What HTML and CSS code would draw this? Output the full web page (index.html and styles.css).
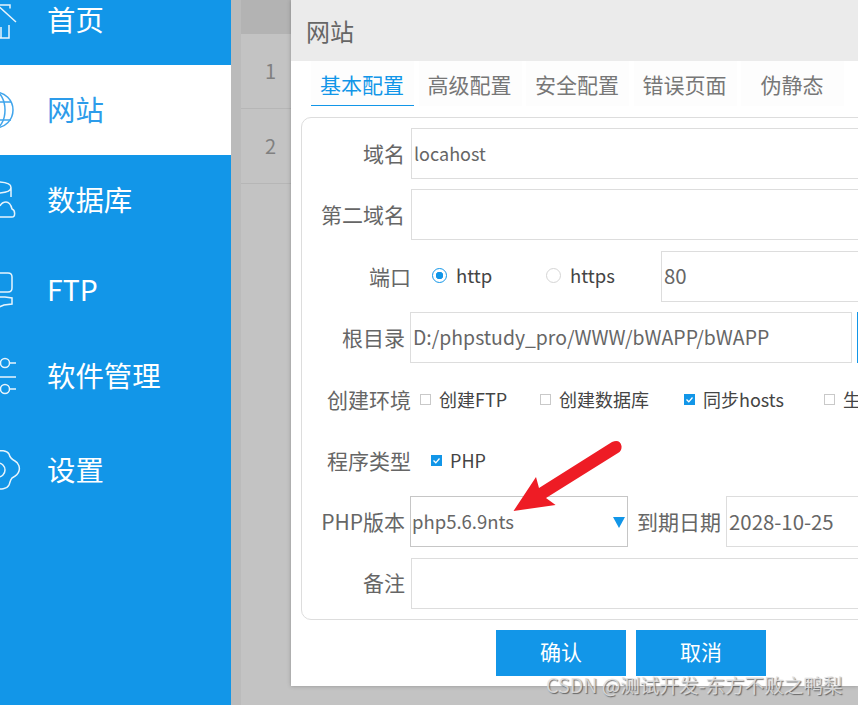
FILE: index.html
```html
<!DOCTYPE html>
<html lang="zh-CN">
<head>
    <meta charset="UTF-8">
    <title>网站</title>
    <link rel="stylesheet" href="styles.css">
</head>
<body>
<div class="app">
    <nav class="sidebar">
        <div class="nav-item">
            <svg class="nav-icon" viewBox="0 0 47 90"><path d="M-4 30H10V33.500M-4 29 16 47M9 50V63H-4M1 63V52"/></svg>
            <span>首页</span>
        </div>
        <div class="nav-item active">
            <svg class="nav-icon" viewBox="0 0 47 90"><circle cx="-5" cy="45" r="18"/><ellipse cx="-5" cy="45" rx="10" ry="18"/><path d="M-20 37H11M-20 55H11M-5 27V63"/></svg>
            <span>网站</span>
        </div>
        <div class="nav-item">
            <svg class="nav-icon" viewBox="0 0 47 90"><path d="M-4 27C5 27 11 29 11 32.500 11 36 5 38-4 38M11 32.500V42M-4 62H12C15.500 62 15.500 55 12 54 11 50 9 47 6 47 3 47 1 49 0 51"/></svg>
            <span>数据库</span>
        </div>
        <div class="nav-item">
            <svg class="nav-icon" viewBox="0 0 47 90"><path d="M-4 28H8C10.500 28 12 29.500 12 32V43C12 45.500 10.500 47 8 47H-4M-4 52H5L12 53V59L4 60-1 62H-4"/></svg>
            <span>FTP</span>
        </div>
        <div class="nav-item">
            <svg class="nav-icon" viewBox="0 0 47 82"><circle cx="5" cy="28" r="4.500"/><path d="M10 28H16M-4 42H16M10 54H16"/><circle cx="5" cy="54" r="4.500"/></svg>
            <span>软件管理</span>
        </div>
        <div class="nav-item">
            <svg class="nav-icon" viewBox="0 0 47 106"><path d="M-4 35C0 33 7 33 9 37 10 41 13 43 15 44 19 46 20 51 19 54 18 58 14 60 12 61 10 63 10 66 9 68 7 72 0 73-4 71"/><circle cx="-2" cy="53" r="7"/></svg>
            <span>设置</span>
        </div>
    </nav>

    <div class="gutter"></div>

    <div class="site-table">
        <div class="table-head"></div>
        <div class="table-row">1</div>
        <div class="table-row">2</div>
    </div>

    <div class="dialog">
        <div class="dialog-title">网站</div>
        <div class="tabs">
            <div class="tab current">基本配置</div>
            <div class="tab">高级配置</div>
            <div class="tab">安全配置</div>
            <div class="tab">错误页面</div>
            <div class="tab">伪静态</div>
        </div>

        <div class="panel">
            <div class="row">
                <label class="row-label">域名</label>
                <input class="field" value="locahost">
            </div>
            <div class="row">
                <label class="row-label">第二域名</label>
                <input class="field">
            </div>
            <div class="row">
                <label class="row-label wide">端口</label>
                <span class="radio on"></span><span class="opt-text http">http</span>
                <span class="radio"></span><span class="opt-text https">https</span>
                <input class="field num-field" value="80">
            </div>
            <div class="row">
                <label class="row-label">根目录</label>
                <input class="field root-field" value="D:/phpstudy_pro/WWW/bWAPP/bWAPP">
                <span class="browse-btn"></span>
            </div>
            <div class="row">
                <label class="row-label wide">创建环境</label>
                <div class="check-group env">
                    <span class="check-item item-ftp"><span class="check"></span>创建FTP</span>
                    <span class="check-item item-db"><span class="check"></span>创建数据库</span>
                    <span class="check-item item-hosts"><span class="check on"><svg viewBox="0 0 11 11"><path d="M2.500 5.500 4.800 7.800 8.500 3.500"/></svg></span>同步hosts</span>
                    <span class="check-item"><span class="check"></span>生</span>
                </div>
            </div>
            <div class="row">
                <label class="row-label wide">程序类型</label>
                <div class="check-group type">
                    <span class="check-item"><span class="check on"><svg viewBox="0 0 11 11"><path d="M2.500 5.500 4.800 7.800 8.500 3.500"/></svg></span>PHP</span>
                </div>
            </div>
            <div class="row">
                <label class="row-label">PHP版本</label>
                <div class="select"><span class="select-text">php5.6.9nts</span><span class="select-arrow"></span></div>
                <label class="date-label">到期日期</label>
                <input class="field num-field" value="2028-10-25">
            </div>
            <div class="row">
                <label class="row-label">备注</label>
                <input class="field">
            </div>
        </div>

        <div class="dialog-buttons">
            <button class="btn">确认</button>
            <button class="btn">取消</button>
        </div>
    </div>
</div>

<!-- 标注箭头 -->
<svg class="arrow" viewBox="0 0 858 705"><path d="M513.500 511 536 477 539 488 612 442Q620 439 621.500 446 622 451 618 453L546 498 555.600 505Z"/></svg>
<div class="watermark">CSDN @测试开发-东方不败之鸭梨</div>
</body>
</html>
```

FILE: styles.css
```css
body {
    margin: 0;
    font-family: "Noto Sans CJK SC", "Noto Sans", sans-serif;
    background-color: #c3c3c3;
    overflow: hidden;
}

.app {
    display: flex;
    height: 705px;
    overflow: hidden;
}

/* 左侧菜单 */
.sidebar {
    flex: none;
    width: 231px;
    height: 730px;
    margin-top: -25px;
    background-color: #1296e8;
    display: grid;
    grid-template-rows: 90px 90px 90px 90px 82px 106px;
    align-content: start;
    color: #fff;
    font-size: 28.400px;
}

.nav-item {
    display: flex;
    align-items: center;
}

.nav-item span {
    margin-bottom: 4px;
}

.nav-item.active {
    background-color: #fff;
    color: #2d9cea;
}

.nav-icon {
    flex: none;
    width: 47px;
    height: 100%;
    overflow: hidden;
    fill: none;
    stroke: currentColor;
    stroke-width: 1.500;
    opacity: 0.9;
}

.gutter {
    flex: none;
    width: 10px;
    background-color: #bbbbbb;
}

/* 遮罩下的表格 */
.site-table {
    flex: none;
    width: 50px;
    color: #808080;
    font-size: 20px;
}

.table-head {
    height: 34px;
    background-color: #b3b3b3;
}

.table-row {
    height: 75px;
    box-sizing: border-box;
    border-bottom: 1px solid #b6b6b6;
    padding-left: 24px;
    line-height: 74px;
}

/* 弹窗 */
.dialog {
    flex: 1;
    min-width: 0;
    height: 686px;
    background-color: #fff;
    box-shadow: 0 0 4px rgba(0, 0, 0, 0.25);
    overflow: hidden;
}

.dialog-title {
    height: 61px;
    box-sizing: border-box;
    padding: 11px 0 0 15px;
    background-color: #ebebeb;
    color: #666;
    font-size: 24px;
    line-height: 40px;
}

.tabs {
    display: flex;
    gap: 4.500px;
    padding-left: 20px;
    margin-bottom: 11px;
}

.tab {
    flex: none;
    width: 103px;
    height: 45px;
    box-sizing: border-box;
    padding-right: 1px;
    text-align: center;
    color: #777;
    font-size: 21px;
    line-height: 46px;
    background-color: #fdfdfd;
}

.tab.current {
    color: #1296e8;
    border-bottom: 1px solid #1296e8;
}

.panel {
    display: flex;
    flex-direction: column;
    gap: 10.400px;
    margin: 0 -40px 0 10px;
    padding: 10px 0;
    border: 1px solid #dddddd;
    border-radius: 10px;
}

.row {
    display: flex;
    align-items: center;
    height: 51px;
    color: #666;
    font-size: 21px;
}

.row-label {
    flex: none;
    width: 103px;
    margin: 0 6px 2px 0;
    text-align: right;
    white-space: nowrap;
}

.row-label.wide {
    width: 109px;
    margin: 0;
}

.field {
    flex: 1;
    min-width: 0;
    height: 51px;
    box-sizing: border-box;
    padding: 0 2px 2px;
    border: 1px solid #dddddd;
    background-color: #fff;
    color: #666;
    font-family: inherit;
    font-size: 18px;
}

.num-field {
    font-size: 20.400px;
}

.root-field {
    flex: none;
    width: 442px;
    margin-left: -1px;
    font-size: 19.400px;
}

.browse-btn {
    flex: none;
    width: 100px;
    height: 51px;
    margin-left: 5px;
    background-color: #1296e8;
}

.radio {
    flex: none;
    box-sizing: border-box;
    width: 15px;
    height: 15px;
    margin: 0 0 1px 21px;
    border: 1px solid #d5d5d5;
    border-radius: 50%;
}

.radio.on {
    border-color: #1296e8;
    background: radial-gradient(circle, #1296e8 0 3.500px, #fff 4px);
}

.opt-text {
    flex: none;
    margin: 0 0 2px 9px;
    color: #444;
    font-size: 18.500px;
}

.opt-text.http {
    width: 60px;
}

.opt-text.https {
    width: 91px;
}

.radio + .opt-text + .radio {
    margin-left: 30px;
}

.check-group {
    display: flex;
    white-space: nowrap;
    color: #444;
    font-size: 18px;
}

.check-group.env {
    margin-left: 9px;
}

.check-group.type {
    margin-left: 20px;
}

.check-item {
    display: flex;
    align-items: center;
    gap: 8px;
}

.item-ftp {
    width: 120px;
}

.item-db {
    width: 144px;
}

.item-hosts {
    width: 140px;
}

.check {
    flex: none;
    box-sizing: border-box;
    width: 11px;
    height: 11px;
    border: 1px solid #c9c9c9;
    background-color: #fff;
}

.check.on {
    border: none;
    background-color: #1296e8;
}

.check svg {
    display: block;
    fill: none;
    stroke: #fff;
    stroke-width: 1.300;
}

.select {
    flex: none;
    display: flex;
    align-items: center;
    justify-content: space-between;
    width: 218px;
    height: 51px;
    margin-left: -1px;
    box-sizing: border-box;
    padding: 0 2px 0 1px;
    border: 1px solid #c6c6c6;
    font-size: 18.500px;
}

.select-text {
    margin-bottom: 2px;
}

.select-arrow {
    width: 0;
    height: 0;
    margin-top: 1px;
    border-left: 6px solid transparent;
    border-right: 6px solid transparent;
    border-top: 11px solid #1296e8;
}

.date-label {
    flex: none;
    margin: 0 5px 2px 9px;
}

.dialog-buttons {
    display: flex;
    gap: 10px;
    padding: 10px 0 0 205px;
}

.btn {
    width: 130px;
    height: 46px;
    padding: 0 0 3px;
    border: none;
    background-color: #1296e8;
    color: #fff;
    font-family: inherit;
    font-size: 21px;
}

/* 覆盖在页面上的内容 */
.arrow {
    position: absolute;
    left: 0;
    top: 0;
    width: 858px;
    height: 705px;
    fill: #ee1c25;
    pointer-events: none;
}

.watermark {
    position: absolute;
    left: 546px;
    top: 672px;
    color: rgba(225, 225, 225, 0.85);
    font-size: 19.600px;
    line-height: 26px;
    white-space: nowrap;
    text-shadow: 1px 1px 1px rgba(70, 70, 70, 0.75);
}
```
